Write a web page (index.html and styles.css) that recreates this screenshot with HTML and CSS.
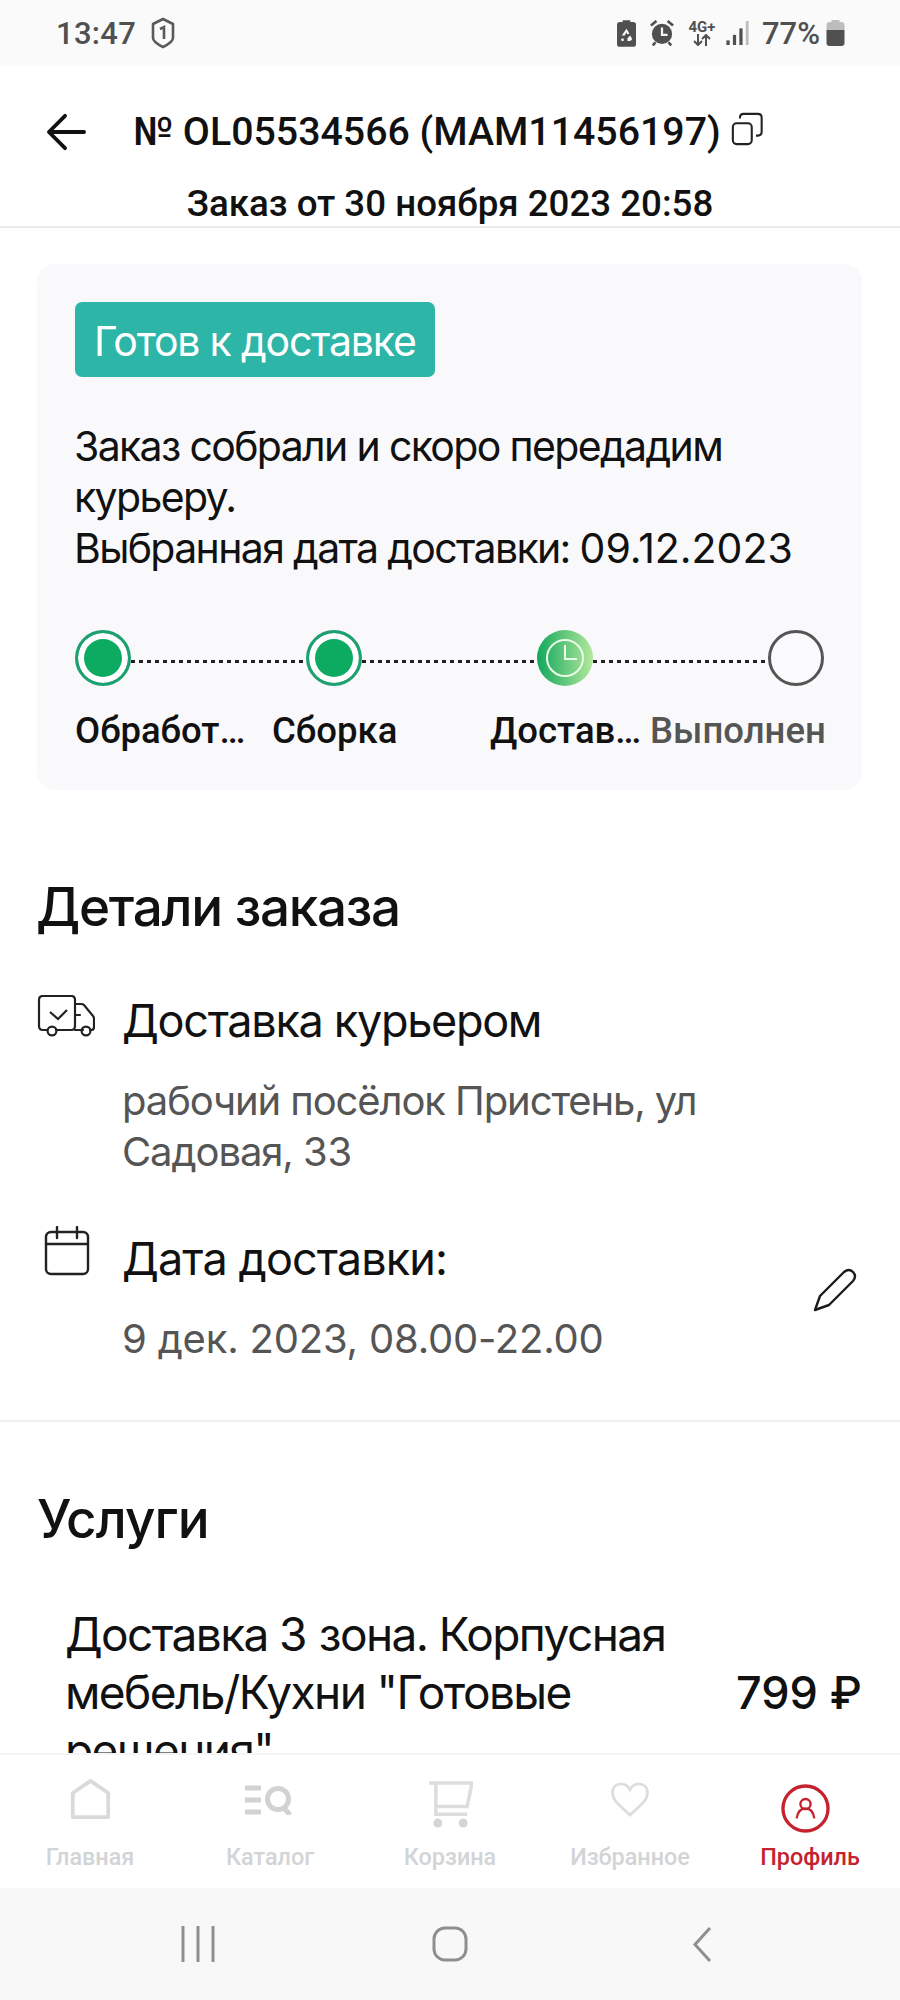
FILE: index.html
```html
<!DOCTYPE html>
<html lang="ru">
<head>
<meta charset="utf-8">
<title>Заказ</title>
<link rel="stylesheet" href="styles.css">
</head>
<body>
<div class="screen">
  <div class="statusbar">
    <div class="status-left">
      <span class="time">13:47</span>
      <svg class="ic-shield" viewBox="0 0 24 32"><path d="M12 2 22 7v14q0 4-10 9Q2 25 2 21V7z" fill="none" stroke="#5a5a5a" stroke-width="2.6" stroke-linejoin="round"/><path d="M9 12l4-2v12" fill="none" stroke="#5a5a5a" stroke-width="2.6"/></svg>
    </div>
    <div class="status-right">
      <svg class="ic-batsave" viewBox="0 0 20 28"><path d="M6 0h8v2h3q3 0 3 3v20q0 3-3 3H3q-3 0-3-3V5q0-3 3-3h3z" fill="#505050"/><path d="M10 9l3 5-2 1-1-2-2 3H5zM14 16l2 4-2 2h-3v-3zM4 20l3-1v3H5z" fill="#fafafa"/></svg>
      <svg class="ic-alarm" viewBox="0 0 26 28"><circle cx="13" cy="15" r="11" fill="#505050"/><path d="M1 6l6-5M25 6l-6-5M6 24l-3 3.5M20 24l3 3.5" stroke="#505050" stroke-width="2.8" fill="none"/><path d="M13 8v8h6" stroke="#fafafa" stroke-width="2.4" fill="none"/></svg>
      <div class="net"><span class="net-label">4G+</span><svg class="ic-arrows" viewBox="0 0 20 12"><path d="M6 0v11M2 7l4 4 4-4M14 12V1M10 5l4-4 4 4" fill="none" stroke="#505050" stroke-width="2"/></svg></div>
      <svg class="ic-signal" viewBox="0 0 24 26"><rect x="0" y="21" width="3.5" height="5" fill="#505050"/><rect x="7" y="15" width="3.5" height="11" fill="#505050"/><rect x="14" y="8" width="3.5" height="18" fill="#505050"/><rect x="21" y="0" width="3" height="26" fill="#bdbdbd"/></svg>
      <span class="pct">77%</span>
      <svg class="ic-battery" viewBox="0 0 18 26"><path d="M5 0h8v2h2q3 0 3 3v5H0V5q0-3 3-3h2z" fill="#bdbdbd"/><path d="M0 10h18v13q0 3-3 3H3q-3 0-3-3z" fill="#505050"/></svg>
    </div>
  </div>

  <header class="topbar">
    <div class="topbar-row">
      <svg class="ic-back" viewBox="0 0 42 40"><path d="M40 20H4M20 3 3 20l17 17" fill="none" stroke="#111" stroke-width="4" stroke-linecap="round" stroke-linejoin="round"/></svg>
      <h1 class="order-no">№ OL05534566 (MAM11456197)</h1>
      <svg class="ic-copy" viewBox="0 0 34 36"><rect x="1.5" y="12" width="20" height="22" rx="4" fill="none" stroke="#222" stroke-width="2.2"/><path d="M9 7V6q0-4 4-4h15q4 0 4 4v15q0 4-4 4h-2" fill="none" stroke="#222" stroke-width="2.2"/></svg>
    </div>
    <p class="order-date">Заказ от 30 ноября 2023 20:58</p>
  </header>

  <main class="content">
    <section class="card">
      <span class="badge">Готов к доставке</span>
      <p class="card-text">Заказ собрали и скоро передадим курьеру.<br>Выбранная дата доставки: <span class="num">09.12.2023</span></p>
      <div class="track">
        <span class="dot dot-done"></span><span class="link"></span>
        <span class="dot dot-done"></span><span class="link"></span>
        <span class="dot dot-now"><svg viewBox="0 0 56 56"><circle cx="28" cy="28" r="18" fill="none" stroke="#eafbe6" stroke-width="2"/><path d="M28 15v14h12" fill="none" stroke="#eafbe6" stroke-width="2"/></svg></span><span class="link"></span>
        <span class="dot dot-todo"></span>
      </div>
      <div class="track-labels">
        <span class="tl tl-1">Обработка</span>
        <span class="tl tl-2">Сборка</span>
        <span class="tl tl-3">Доставка</span>
        <span class="tl tl-4">Выполнен</span>
      </div>
    </section>

    <section class="details">
      <h2 class="section-title">Детали заказа</h2>
      <div class="info-row info-row-first">
        <svg class="ic-truck" viewBox="0 0 58 42"><path d="M10 35H6q-4 0-4-4V5q0-4 4-4h28q4 0 4 4v26q0 4-4 4H19M38 9h6q2 0 3 1l9 11q1 1 1 3v8q0 3-3 3h-1M46 35h-8M38 20h5" fill="none" stroke="#222" stroke-width="2.2" stroke-linecap="round"/><path d="M13 17l8 7 9-9" fill="none" stroke="#222" stroke-width="2.2"/><circle cx="15" cy="36" r="4.4" fill="none" stroke="#222" stroke-width="2.2"/><circle cx="49" cy="36" r="4.4" fill="none" stroke="#222" stroke-width="2.2"/></svg>
        <div class="info-body">
          <div class="info-title">Доставка курьером</div>
          <p class="info-sub">рабочий посёлок Пристень, ул Садовая, <span class="num">33</span></p>
        </div>
      </div>
      <div class="info-row info-row-second">
        <svg class="ic-cal" viewBox="0 0 46 50"><rect x="2" y="6" width="42" height="42" rx="5" fill="none" stroke="#222" stroke-width="2.4"/><path d="M2 18h42M13 1v11M33 1v11" fill="none" stroke="#222" stroke-width="2.4" stroke-linecap="round"/></svg>
        <div class="info-body">
          <div class="info-title info-title-date">Дата доставки:</div>
          <p class="info-sub info-sub-date">9 дек. 2023, 08.00-22.00</p>
        </div>
        <svg class="ic-pen" viewBox="0 0 46 46"><path d="M3 43l5-14L32 5q5-4 9 0t0 9L17 38z" fill="none" stroke="#1c1c1c" stroke-width="2.4" stroke-linejoin="round"/></svg>
      </div>
    </section>

    <section class="services">
      <h2 class="section-title section-title-tight">Услуги</h2>
      <div class="service">
        <p class="service-name">Доставка <span class="num">3</span> зона. Корпусная мебель/Кухни "Готовые решения"</p>
        <span class="service-price">799 ₽</span>
      </div>
    </section>
  </main>

  <nav class="tabs">
    <a class="tab"><svg class="tab-ic ti-home" viewBox="0 0 44 44"><path d="M3 41V15L22 2l19 13v26z" fill="none" stroke="#d8dadb" stroke-width="4" stroke-linejoin="round"/></svg><span>Главная</span></a>
    <a class="tab"><svg class="tab-ic ti-cat" viewBox="0 0 50 30"><path d="M0 3h16M0 15h16M0 27h16" stroke="#d0d2d4" stroke-width="5" fill="none"/><circle cx="33" cy="14" r="10.5" fill="none" stroke="#d0d2d4" stroke-width="5"/><path d="M38 22l7 8" stroke="#d0d2d4" stroke-width="5" fill="none"/></svg><span>Каталог</span></a>
    <a class="tab"><svg class="tab-ic ti-cart" viewBox="0 0 46 48"><path d="M1 2h44l-5 24H8M8 2v32h32" fill="none" stroke="#dcdddf" stroke-width="3.6"/><circle cx="10" cy="43" r="4.6" fill="#d4d5d7"/><circle cx="36" cy="43" r="4.6" fill="#d4d5d7"/></svg><span>Корзина</span></a>
    <a class="tab"><svg class="tab-ic ti-heart" viewBox="0 0 40 36"><path d="M20 34C12 26 2 20 2 11 2 5 6 2 11 2c4 0 7 2 9 6 2-4 5-6 9-6 5 0 9 3 9 9 0 9-10 15-18 23z" fill="none" stroke="#dcdddf" stroke-width="2.8"/></svg><span>Избранное</span></a>
    <a class="tab tab-active"><svg class="tab-ic ti-user" viewBox="0 0 50 50"><circle cx="25" cy="25" r="23" fill="none" stroke="#c5222f" stroke-width="3.4"/><circle cx="25" cy="20.5" r="5.2" fill="none" stroke="#c5222f" stroke-width="2.4"/><path d="M16 35c1-7 4-10 9-10s8 3 9 10" fill="none" stroke="#c5222f" stroke-width="2.4"/></svg><span>Профиль</span></a>
  </nav>

  <div class="sysnav">
    <svg class="sys-recent" viewBox="0 0 34 36"><path d="M2 0v36M17 0v36M32 0v36" stroke="#8f8f8f" stroke-width="3" fill="none"/></svg>
    <svg class="sys-home" viewBox="0 0 36 36"><rect x="2" y="2" width="32" height="32" rx="11" fill="none" stroke="#8f8f8f" stroke-width="3"/></svg>
    <svg class="sys-back" viewBox="0 0 20 37"><path d="M18 2 3 18.500l15 16.500" fill="none" stroke="#8f8f8f" stroke-width="3"/></svg>
  </div>
</div>
</body>
</html>
```

FILE: styles.css
```css
* { box-sizing: border-box; }
html, body { margin: 0; padding: 0; }
body { background: #fff; color: #111; font-family: Inter, "Noto Sans", sans-serif; }
h1, h2, p { margin: 0; font-weight: inherit; }
svg { display: block; flex: none; }
.num { letter-spacing: 0; }

.screen { width: 900px; height: 2000px; display: flex; flex-direction: column; overflow: hidden; background: #fff; }

/* status bar */
.statusbar { height: 66px; flex: none; background: #fafafa; display: flex; justify-content: space-between; align-items: center; padding: 0 55px 0 56px; color: #505050; font-family: Roboto, sans-serif; font-weight: 500; }
.status-left { display: flex; align-items: center; gap: 15px; }
.time { font-size: 31px; letter-spacing: .3px; }
.ic-shield { width: 24px; height: 32px; }
.status-right { display: flex; align-items: center; }
.ic-batsave { width: 19px; height: 27px; margin-right: 14px; }
.ic-alarm { width: 24px; height: 26px; margin-right: 14px; }
.net { display: flex; flex-direction: column; align-items: center; width: 28px; margin-right: 10px; }
.net-label { font-size: 15px; line-height: 14px; font-weight: 700; }
.ic-arrows { width: 20px; height: 12px; }
.ic-signal { width: 23px; height: 24px; margin-right: 13px; }
.pct { font-size: 31px; margin-right: 6px; }
.ic-battery { width: 19px; height: 26px; }

/* top bar */
.topbar { height: 162px; flex: none; border-bottom: 2px solid #ececec; background: #fff; display: flex; flex-direction: column; }
.topbar-row { display: flex; align-items: center; padding: 47px 0 0 46px; height: 85px; }
.ic-back { width: 40px; height: 38px; }
.order-no { margin-left: 47px; font-family: Roboto, sans-serif; font-size: 39.3px; line-height: 44px; font-weight: 500; white-space: nowrap; }
.ic-copy { width: 33px; height: 34px; margin-left: 10px; margin-top: -6px; }
.order-date { margin-top: 33px; text-align: center; font-family: Roboto, sans-serif; font-size: 36.7px; line-height: 40px; font-weight: 500; }

/* content */
.content { flex: 1; min-height: 0; overflow: hidden; background: #fff; padding: 36px 38px 0 37px; }

.card { height: 526px; background: #f9f9fb; border-radius: 18px; padding: 38px 38px 0; }
.badge { display: inline-block; height: 75px; width: 360px; padding-left: 19px; line-height: 79px; background: #2db5a7; color: #fff; border-radius: 7px; font-size: 41px; letter-spacing: -1.2px; font-weight: 400; white-space: nowrap; }
.card-text { margin: 44px 0 0 -1px; font-size: 41px; letter-spacing: -1.65px; line-height: 51px; color: #111; }

.track { margin-top: 56px; display: flex; align-items: center; }
.dot { width: 56px; height: 56px; border-radius: 50%; flex: none; display: block; }
.dot-done { background: #0dab62; border: 3px solid #1fa071; box-shadow: inset 0 0 0 6px #fff; }
.dot-now { background: linear-gradient(90deg, #12a85d, #b4e89c); }
.dot-now svg { width: 56px; height: 56px; }
.dot-todo { border: 3px solid #555; background: #fbfbfd; }
.link { flex: 1; height: 3px; margin-top: 7px; background: repeating-linear-gradient(90deg, #222 0 4px, transparent 4px 8px); }

.track-labels { margin-top: 25px; display: grid; grid-template-columns: 197px 218px 160px 176px; font-family: Roboto, sans-serif; font-size: 36.5px; line-height: 40px; font-weight: 500; }
.tl { display: block; overflow: hidden; white-space: nowrap; text-overflow: ellipsis; }
.tl-1 { width: 172px; }
.tl-3 { width: 152px; }
.tl-4 { color: #555; }

.section-title { margin-left: -1px; font-size: 53px; letter-spacing: -1.3px; line-height: 58px; font-weight: 500; color: #111; }
.section-title-tight { letter-spacing: -.9px; }
.details { padding-top: 88px; }
.info-row { display: flex; align-items: flex-start; }
.info-row-first { margin-top: 61px; }
.info-row-second { margin-top: 57px; }
.info-body { flex: 1; margin-left: 27px; }
.ic-truck { width: 58px; height: 42px; margin-top: -2px; }
.ic-cal { width: 46px; height: 50px; margin: -8px 32px 0 7px; }
.info-row-second .info-body { margin-left: 0; }
.info-title { font-size: 45px; letter-spacing: -1.3px; line-height: 56px; color: #111; margin-top: -4px; }
.info-title-date { letter-spacing: -.9px; margin-top: -3px; }
.info-sub { margin-top: 26px; font-size: 40px; letter-spacing: -1.1px; line-height: 51px; color: #555; padding-right: 120px; }
.info-sub-date { margin-top: 26px; letter-spacing: -.2px; padding-right: 0; }
.ic-pen { width: 46px; height: 46px; align-self: center; margin: 0 4px 18px 0; }

.services { margin: 56px -38px 0 -37px; padding: 68px 38px 0 38px; border-top: 2px solid #efefef; }
.service { margin-top: 57px; padding-left: 27px; display: flex; justify-content: space-between; align-items: center; }
.service-name { width: 640px; font-size: 46px; letter-spacing: -1.6px; line-height: 58px; color: #111; }
.service-price { font-size: 45px; font-weight: 500; color: #111; white-space: nowrap; }

/* tabs */
.tabs { height: 135px; flex: none; background: #fff; border-top: 2px solid #f5f5f5; display: grid; grid-template-columns: repeat(5, 180px); font-family: Roboto, sans-serif; }
.tab { display: flex; flex-direction: column; align-items: center; justify-content: flex-end; padding-bottom: 17px; font-size: 23.4px; line-height: 28px; font-weight: 500; color: #d2d4d6; }
.ti-home { width: 41px; height: 41px; margin-bottom: 23px; }
.ti-cat { width: 50px; height: 30px; margin-bottom: 28px; }
.ti-cart { width: 45px; height: 47px; margin-bottom: 15px; }
.ti-heart { width: 40px; height: 35px; margin-bottom: 26px; }
.ti-user { width: 49px; height: 49px; margin: 0 10px 10px 0; }
.tab-active { color: #c5222f; }

/* system nav */
.sysnav { height: 112px; flex: none; background: #f8f8f8; display: grid; grid-template-columns: repeat(3, 1fr); align-items: center; justify-items: center; padding: 0 72px; }
.sys-recent { width: 34px; height: 36px; }
.sys-home { width: 36px; height: 36px; }
.sys-back { width: 20px; height: 37px; }
```
